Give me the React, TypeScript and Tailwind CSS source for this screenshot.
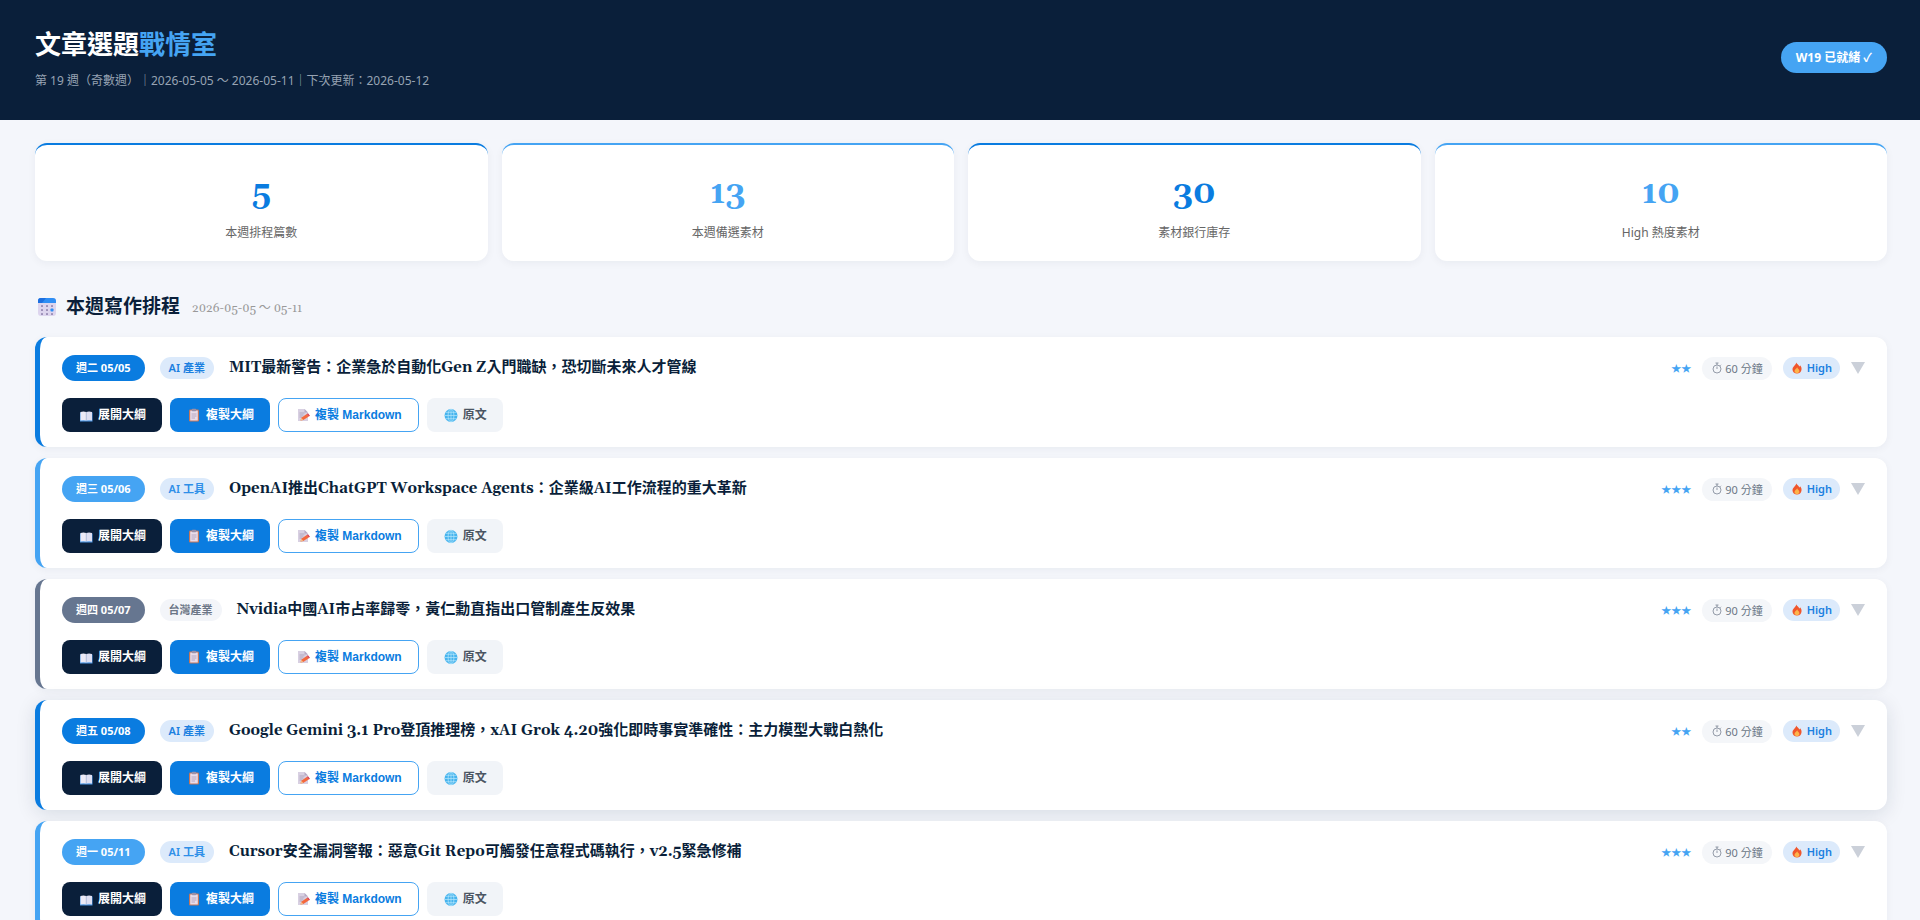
interface IStat {
    value: number;
    label: string;
    light?: boolean;
}

interface IArticle {
    day: string;
    tag: string;
    title: string;
    stars: number;
    minutes: number;
    tone: "blue" | "sky" | "slate";
    raised?: boolean;
}

const stats: IStat[] = [
    { value: 5, label: "本週排程篇數" },
    { value: 13, label: "本週備選素材", light: true },
    { value: 30, label: "素材銀行庫存" },
    { value: 10, label: "High 熱度素材", light: true },
];

const articles: IArticle[] = [
    { day: "週二 05/05", tag: "AI 產業", title: "MIT最新警告：企業急於自動化Gen Z入門職缺，恐切斷未來人才管線", stars: 2, minutes: 60, tone: "blue" },
    { day: "週三 05/06", tag: "AI 工具", title: "OpenAI推出ChatGPT Workspace Agents：企業級AI工作流程的重大革新", stars: 3, minutes: 90, tone: "sky" },
    { day: "週四 05/07", tag: "台灣產業", title: "Nvidia中國AI市占率歸零，黃仁勳直指出口管制產生反效果", stars: 3, minutes: 90, tone: "slate" },
    { day: "週五 05/08", tag: "AI 產業", title: "Google Gemini 3.1 Pro登頂推理榜，xAI Grok 4.20強化即時事實準確性：主力模型大戰白熱化", stars: 2, minutes: 60, tone: "blue", raised: true },
    { day: "週一 05/11", tag: "AI 工具", title: "Cursor安全漏洞警報：惡意Git Repo可觸發任意程式碼執行，v2.5緊急修補", stars: 3, minutes: 90, tone: "sky" },
];

const borderTone = {
    blue: "border-[#0a7ce0]",
    sky: "border-[#45a4f3]",
    slate: "border-[#667690]",
};

const pillTone = {
    blue: "bg-[#0a7ce0]",
    sky: "bg-[#45a4f3]",
    slate: "bg-[#667690]",
};

const tagTone = {
    blue: "bg-[#dceafb] text-[#1a7fe0]",
    sky: "bg-[#dceafb] text-[#2e8fe8]",
    slate: "bg-[#f3f5f9] text-[#6b7686]",
};

const serif = "font-['Gelasio','Georgia','Liberation_Serif','Noto_Sans_CJK_TC',serif]";

const CalendarIcon = () => (
    <svg className="w-5 h-5" viewBox="0 0 20 20" aria-hidden="true">
        <rect x="1" y="1" width="18" height="18" rx="3" fill="#ddd5ee" />
        <path d="M1 6V4a3 3 0 0 1 3-3h12a3 3 0 0 1 3 3v2z" fill="#2f8ef4" />
        <path d="M1 4a3 3 0 0 1 3-3h5L5 6H1z" fill="#1c6fe0" />
        <g fill="#9c8fb8">
            <rect x="4" y="8" width="2" height="2" rx="0.5" />
            <rect x="9" y="8" width="2" height="2" rx="0.5" />
            <rect x="14" y="8" width="2" height="2" rx="0.5" />
            <rect x="4" y="12" width="2" height="2" rx="0.5" />
            <rect x="9" y="12" width="2" height="2" rx="0.5" />
            <rect x="4" y="16" width="2" height="2" rx="0.5" />
            <rect x="9" y="16" width="2" height="2" rx="0.5" />
            <rect x="14" y="16" width="2" height="2" rx="0.5" />
        </g>
        <rect x="13.5" y="11.5" width="3" height="3" rx="0.8" fill="#2f8ef4" />
    </svg>
);

const BookIcon = () => (
    <svg className="w-4 h-4" viewBox="0 0 16 16" aria-hidden="true">
        <path d="M2 5.500h12.500v9H2z" fill="#4f9be8" />
        <path d="M2.500 5Q5.500 3.800 8.200 5V13.500Q5.500 12.800 2.500 13.500z" fill="#eceaf6" />
        <path d="M14 5Q11 3.800 8.200 5V13.500Q11 12.800 14 13.500z" fill="#dedff2" />
        <path d="M8.200 5V13.500" stroke="#a9aecb" strokeWidth="0.6" />
    </svg>
);

const ClipboardIcon = () => (
    <svg className="w-4 h-4" viewBox="0 0 16 16" aria-hidden="true">
        <rect x="3" y="2.500" width="10" height="12" rx="1.200" fill="#c4765a" />
        <rect x="4.200" y="3.500" width="7.600" height="10" fill="#e9dcea" />
        <path d="M5.500 7h5M5.500 9h5M5.500 11h3.500" stroke="#a99bb8" strokeWidth="0.8" />
        <rect x="5.800" y="1.800" width="4.400" height="2.400" rx="0.8" fill="#9a90a8" />
    </svg>
);

const MemoIcon = () => (
    <svg className="w-4 h-4" viewBox="0 0 16 16" aria-hidden="true">
        <path d="M3 2h6.500L13 5.500V14H3z" fill="#d8d0e2" />
        <path d="M9.500 2v3.500H13z" fill="#b5aac4" />
        <path d="M4.500 6h5M4.500 8h4M4.500 10h3" stroke="#a89db6" strokeWidth="0.8" />
        <path d="M5.500 13.500 6.300 10.800 11.800 7 13.800 9.500 8.300 13z" fill="#f4683c" />
        <path d="M11.800 7 13 6.200 15 8.700 13.800 9.500z" fill="#d83b50" />
        <path d="M5.500 13.500 6.300 10.800 8.300 13z" fill="#f3c08c" />
    </svg>
);

const GlobeIcon = () => (
    <svg className="w-4 h-4" viewBox="0 0 16 16" aria-hidden="true">
        <circle cx="8" cy="8.500" r="6.500" fill="#47b4ee" />
        <g fill="none" stroke="#b6e6fb" strokeWidth="0.7">
            <ellipse cx="8" cy="8.500" rx="2.900" ry="6.500" />
            <path d="M8 2v13M1.500 8.500h13M2.500 5.300h11M2.500 11.700h11" />
        </g>
    </svg>
);

const TimerIcon = () => (
    <svg className="w-3 h-3" viewBox="0 0 12 12" fill="none" stroke="currentColor" strokeWidth="0.7" aria-hidden="true">
        <circle cx="6" cy="7" r="4" />
        <path d="M6 7V4.500M6 3V1M4.500 1h3M9 3.800l1-1" />
    </svg>
);

const FireIcon = () => (
    <svg className="w-3 h-3" viewBox="0 0 12 12" aria-hidden="true">
        <path d="M5.400 0.500C6 2.200 8 3 8.300 4.600 8.800 4.300 9 3.800 9 3.300 10.300 4.700 10.700 6 10.500 7.500 10.200 9.900 8.400 11.500 6 11.500S1.600 9.900 1.500 7.500C1.400 5.300 3 4.300 3.900 3 4.500 2.200 5.200 1.500 5.400 0.500z" fill="#f0562c" />
        <path d="M6.200 5.200C6.500 6.600 8.500 7.200 8.400 9 8.300 10.400 7.300 11.200 6 11.200S3.500 10.400 3.500 9C3.500 7.300 5.600 6.800 6.200 5.200z" fill="#fdb44a" />
    </svg>
);

const StatCard = ({ value, label, light }: IStat) => (
    <div className={`rounded-xl bg-white border-t-2 pt-[27px] pb-[19px] text-center shadow-[0_2px_8px_rgba(10,31,56,0.05)] ${light ? "border-[#45a4f3]" : "border-[#0a7ce0]"}`}>
        <div className={`${serif} text-[32px] leading-[44px] font-bold ${light ? "text-[#45a4f3]" : "text-[#0a7ce0]"}`}>{value}</div>
        <div className="mt-2 text-xs leading-[18px] text-[#666]">{label}</div>
    </div>
);

const ArticleCard = (props: IArticle) => {
    const { day, tag, title, stars, minutes, tone, raised } = props;

    return (
        <article className={`rounded-xl bg-white border-l-[5px] px-[22px] pt-[18px] pb-[15px] ${borderTone[tone]} ${raised ? "shadow-[0_4px_20px_rgba(10,31,56,0.12)]" : "shadow-[0_2px_8px_rgba(10,31,56,0.05)]"}`}>
            <div className="flex items-center justify-between">
                <div className="flex items-center gap-[15px]">
                    <span className={`rounded-full px-3.5 text-[11px] leading-[26px] font-bold text-white ${pillTone[tone]}`}>{day}</span>
                    <span className={`rounded-full px-[9px] text-[11px] leading-[22px] font-semibold ${tagTone[tone]}`}>{tag}</span>
                    <h3 className={`${serif} text-[15px] leading-[26px] font-bold text-[#0a1f3a]`}>{title}</h3>
                </div>
                <div className="flex items-center gap-[11px]">
                    <span className="font-['Noto_Sans_CJK_TC',sans-serif] text-[10px] leading-[22px] text-[#45a4f3]">{"★".repeat(stars)}</span>
                    <span className="flex items-center gap-0.5 rounded-full bg-[#f4f6f9] px-[9px] text-[11px] leading-[23px] text-[#6b7686]">
                        <TimerIcon />
                        {minutes} 分鐘
                    </span>
                    <span className="flex items-center gap-1 rounded-full bg-[#dceafb] px-2 text-[11px] leading-[22px] font-semibold text-[#1a7fe0]">
                        <FireIcon />
                        High
                    </span>
                    <button type="button" aria-label="展開" className="text-[#cbd0d9]">
                        <svg className="w-3.5 h-3.5" viewBox="0 0 14 14" fill="currentColor"><path d="M0 1h14L7 13z" /></svg>
                    </button>
                </div>
            </div>
            <div className="mt-[17px] flex gap-2 font-['Liberation_Sans','Noto_Sans_CJK_TC',sans-serif] text-xs font-bold">
                <button type="button" className="flex h-[34px] items-center gap-1 rounded-lg bg-[#0a1f3a] px-4 text-white"><BookIcon />展開大綱</button>
                <button type="button" className="flex h-[34px] items-center gap-1 rounded-lg bg-[#0a7ce0] px-4 text-white"><ClipboardIcon />複製大綱</button>
                <button type="button" className="flex h-[34px] items-center gap-1 rounded-lg border border-[#45a4f3] bg-white px-4 text-[#0a7ce0]"><MemoIcon />複製 Markdown</button>
                <a href="#" className="flex h-[34px] items-center gap-1 rounded-lg bg-[#f1f4f8] px-4 text-[#4b5563]"><GlobeIcon />原文</a>
            </div>
        </article>
    );
};

export default function App() {
    return (
        <div className="min-h-screen bg-[#f4f6fb] font-['Noto_Sans','Noto_Sans_CJK_TC',sans-serif]">
            <header className="flex items-center justify-between bg-[#0a1f3a] pt-[25px] pb-[30px] pl-[35px] pr-[33px]">
                <div>
                    <h1 className="text-[26px] leading-[39px] font-bold text-white">文章選題<span className="text-[#45a4f3]">戰情室</span></h1>
                    <p className="mt-2 text-xs leading-[18px] text-[#97a3b3]">第 19 週（奇數週）｜2026-05-05 ～ 2026-05-11｜下次更新：2026-05-12</p>
                </div>
                <span className="rounded-full bg-[#45a4f3] px-[15px] text-xs leading-[31px] font-bold text-white">W19 已就緒 ✓</span>
            </header>

            <main className="pt-[23px] pb-8 pl-[35px] pr-[33px]">
                <section className="grid grid-cols-4 gap-3.5">
                    {stats.map((s) => <StatCard key={s.label} {...s} />)}
                </section>

                <div className={`${serif} mt-[31px] mb-[15px] flex items-center pl-0.5`}>
                    <CalendarIcon />
                    <h2 className="ml-[9px] text-[19px] leading-[30px] font-bold text-[#0a1f3a]">本週寫作排程</h2>
                    <span className="ml-3 pt-1 text-xs leading-[26px] text-[#999]">2026-05-05 ～ 05-11</span>
                </div>

                <section className="flex flex-col gap-[11px]">
                    {articles.map((a) => <ArticleCard key={a.day} {...a} />)}
                </section>
            </main>
        </div>
    );
}
